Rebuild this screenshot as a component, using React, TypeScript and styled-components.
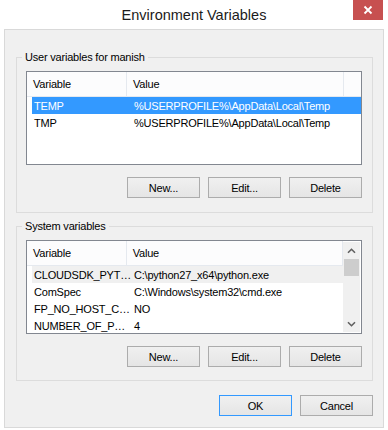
import React, { FunctionComponent } from 'react';
import styled, { createGlobalStyle } from 'styled-components';

const GlobalStyle = createGlobalStyle`
  body {
    margin: 0;
    background: #ffffff;
  }
`;

const Window = styled.div`
  width: 388px;
  height: 430px;
  background: #ffffff;
  display: flex;
  flex-direction: column;
  font-family: 'Segoe UI', 'Liberation Sans', Arial, sans-serif;
  font-size: 11px;
  letter-spacing: -0.2px;
  color: #000000;
  box-sizing: border-box;
`;

const TitleBar = styled.div`
  height: 29px;
  display: grid;
  grid-template-columns: 1fr auto 1fr;
  align-items: start;
`;

const Title = styled.div`
  grid-column: 2;
  font-size: 14.5px;
  letter-spacing: 0;
  line-height: 30px;
  color: #1b1b1b;
`;

const CloseButton = styled.button`
  justify-self: end;
  margin-right: 5px;
  width: 30px;
  height: 20px;
  border: 0;
  padding: 0;
  background: #c75050;
  display: flex;
  align-items: center;
  justify-content: center;
`;

const Client = styled.div`
  flex: 1;
  margin: 0 4px 2px;
  border: 1px solid #d9d9d9;
  background: #f0f0f0;
  padding: 19px 10px 0 11px;
  display: flex;
  flex-direction: column;
`;

// group box: a fieldset whose legend sits on the top line
const Group = styled.fieldset<{ $gap?: number; $bottom?: number }>`
  margin: ${(props) => props.$gap ?? 0}px 0 0;
  padding: 6px 10px ${(props) => props.$bottom ?? 14}px 9px;
  border: 1px solid #dcdcdc;
  min-width: 0;
`;

const Legend = styled.legend`
  padding: 0 3px;
  margin-left: -4px;
  line-height: 16px;
`;

const ListBox = styled.div`
  height: 94px;
  box-sizing: border-box;
  border: 1px solid #828790;
  background: #ffffff;
  display: flex;
  overflow: hidden;
`;

const ListMain = styled.div`
  flex: 1;
  min-width: 0;
  display: flex;
  flex-direction: column;
`;

const Header = styled.div`
  height: 25px;
  box-sizing: border-box;
  display: flex;
  background: #fcfcfd;
  border-bottom: 1px solid #e5e9ef;
`;

const HeaderCell = styled.div<{ $width: number }>`
  width: ${(props) => props.$width}px;
  box-sizing: border-box;
  padding-left: 6px;
  line-height: 25px;
  border-right: 1px solid #e5e9ef;
`;

const Row = styled.div<{ $state?: 'active' | 'inactive' }>`
  margin-left: 5px;
  display: grid;
  grid-template-columns: 95px 216px;
  height: 17px;
  line-height: 18px;
  white-space: nowrap;
  background: ${(props) =>
    props.$state === 'active'
      ? '#3399ff'
      : props.$state === 'inactive'
        ? '#f0f0f0'
        : 'transparent'};
  color: ${(props) => (props.$state === 'active' ? '#ffffff' : '#000000')};
`;

const NameCell = styled.span`
  padding-left: 2px;
`;

const ValueCell = styled.span`
  padding-left: 7px;
  overflow: hidden;
`;

const ScrollBar = styled.div`
  width: 17px;
  margin: 1px 1px 1px 0;
  background: #f0f0f0;
  display: flex;
  flex-direction: column;
`;

const ArrowBox = styled.div`
  height: 17px;
  display: flex;
  align-items: center;
  justify-content: center;
`;

const Thumb = styled.div`
  height: 17px;
  margin: 0 1px;
  background: #cdcdcd;
`;

const Track = styled.div`
  flex: 1;
`;

const ButtonRow = styled.div<{ $top: number }>`
  display: flex;
  justify-content: flex-end;
  gap: 8px;
  margin-top: ${(props) => props.$top}px;
`;

const Button = styled.button<{ $default?: boolean }>`
  width: 73px;
  height: 21px;
  padding: 0;
  border: 1px solid ${(props) => (props.$default ? '#3399ff' : '#acacac')};
  background: linear-gradient(#f0f0f0, #e5e5e5);
  font: inherit;
  letter-spacing: inherit;
  color: #000000;
`;

interface EnvVar {
  name: string;
  value: string;
}

const userVars: EnvVar[] = [
  { name: 'TEMP', value: '%USERPROFILE%\\AppData\\Local\\Temp' },
  { name: 'TMP', value: '%USERPROFILE%\\AppData\\Local\\Temp' },
];

const systemVars: EnvVar[] = [
  { name: 'CLOUDSDK_PYT…', value: 'C:\\python27_x64\\python.exe' },
  { name: 'ComSpec', value: 'C:\\Windows\\system32\\cmd.exe' },
  { name: 'FP_NO_HOST_C…', value: 'NO' },
  { name: 'NUMBER_OF_P…', value: '4' },
];

const Chevron: FunctionComponent<{ down?: boolean }> = ({ down }) => (
  <svg width="9" height="6" viewBox="0 0 9 6">
    <path
      d={down ? 'M1 1.2 L4.5 4.7 L8 1.2' : 'M1 4.8 L4.5 1.3 L8 4.8'}
      fill="none"
      stroke="#606060"
      strokeWidth="1.6"
    />
  </svg>
);

interface VarListProps {
  vars: EnvVar[];
  selected: 'active' | 'inactive';
  scroll?: boolean;
}

const VarList: FunctionComponent<VarListProps> = ({ vars, selected, scroll }) => (
  <ListBox>
    <ListMain>
      <Header>
        <HeaderCell $width={100}>Variable</HeaderCell>
        <HeaderCell $width={217}>Value</HeaderCell>
      </Header>
      {vars.map((v, i) => (
        <Row key={v.name} $state={i === 0 ? selected : undefined}>
          <NameCell>{v.name}</NameCell>
          <ValueCell>{v.value}</ValueCell>
        </Row>
      ))}
    </ListMain>
    {scroll && (
      <ScrollBar>
        <ArrowBox>
          <Chevron />
        </ArrowBox>
        <Thumb />
        <Track />
        <ArrowBox>
          <Chevron down />
        </ArrowBox>
      </ScrollBar>
    )}
  </ListBox>
);

const EditButtons = ({ top }: { top: number }) => (
  <ButtonRow $top={top}>
    <Button>New...</Button>
    <Button>Edit...</Button>
    <Button>Delete</Button>
  </ButtonRow>
);

export default function App() {
  return (
    <>
      <GlobalStyle />
      <Window>
        <TitleBar>
          <Title>Environment Variables</Title>
          <CloseButton aria-label="Close">
            <svg width="10" height="10" viewBox="0 0 10 10">
              <path
                d="M1.5 1.5 L8.5 8.5 M8.5 1.5 L1.5 8.5"
                stroke="#ffffff"
                strokeWidth="1.8"
              />
            </svg>
          </CloseButton>
        </TitleBar>
        <Client>
          <Group>
            <Legend>User variables for manish</Legend>
            <VarList vars={userVars} selected="active" />
            <EditButtons top={12} />
          </Group>
          <Group $gap={5} $bottom={13}>
            <Legend>System variables</Legend>
            <VarList vars={systemVars} selected="inactive" scroll />
            <EditButtons top={12} />
          </Group>
          <ButtonRow $top={14}>
            <Button $default>OK</Button>
            <Button>Cancel</Button>
          </ButtonRow>
        </Client>
      </Window>
    </>
  );
}
